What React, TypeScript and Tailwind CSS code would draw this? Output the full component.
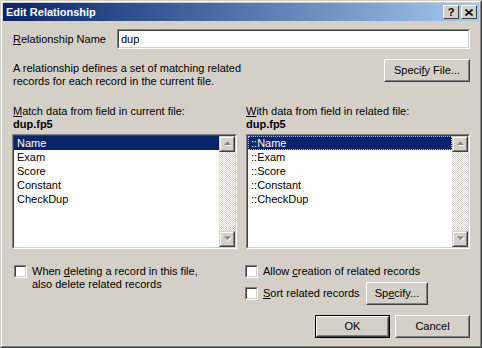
import React from "react";

const FIELDS = ["Name", "Exam", "Score", "Constant", "CheckDup"];

// classic raised button, optional default (black) ring
function Btn({ children, w, isDefault }: { children: React.ReactNode; w: string; isDefault?: boolean }) {
  const inner = (
    <div className="h-full border border-t-white border-l-white border-b-[#404040] border-r-[#404040]">
      <div className="h-full flex items-center justify-center border border-t-[#d4d0c8] border-l-[#d4d0c8] border-b-[#808080] border-r-[#808080]">
        {children}
      </div>
    </div>
  );
  return (
    <div className={`${w} h-[23px] shrink-0 ${isDefault ? "border border-black" : ""}`}>{inner}</div>
  );
}

function Sunken({ className, children }: { className?: string; children?: React.ReactNode }) {
  return (
    <div className={`border border-t-[#808080] border-l-[#808080] border-b-white border-r-white ${className ?? ""}`}>
      <div className="h-full border border-t-[#404040] border-l-[#404040] border-b-[#d4d0c8] border-r-[#d4d0c8] bg-white">
        {children}
      </div>
    </div>
  );
}

function Check() {
  return <Sunken className="w-[13px] h-[13px] shrink-0" />;
}

function ScrollArrow({ up }: { up?: boolean }) {
  return (
    <div className="w-[16px] h-[16px] shrink-0 border border-t-[#d4d0c8] border-l-[#d4d0c8] border-b-[#404040] border-r-[#404040]">
      <div className="h-full bg-[#d4d0c8] flex items-center justify-center border border-t-white border-l-white border-b-[#808080] border-r-[#808080]">
        <svg width="9" height="6" viewBox="0 0 9 6">
          {up ? (
            <>
              <path d="M2 5h7L5.5 1.5z" fill="#fff" />
              <path d="M1 4h7L4.5 0.5z" fill="#808080" />
            </>
          ) : (
            <>
              <path d="M2 1.5h7L5.5 5z" fill="#fff" />
              <path d="M1 0.5h7L4.5 4z" fill="#808080" />
            </>
          )}
        </svg>
      </div>
    </div>
  );
}

function ListBox({ prefix, w, focus }: { prefix: string; w: string; focus?: boolean }) {
  return (
    <Sunken className={`${w} h-[115px]`}>
      <div className="flex h-full">
        <div className="flex-1 flex flex-col">
          {FIELDS.map((f, i) => (
            <div
              key={f}
              className={`h-[14px] leading-[14px] pl-[3px] ${
                i === 0 ? "bg-[#0a246a] text-white" : ""
              } ${i === 0 && focus ? "outline outline-1 outline-dotted outline-[#c0c0c0] -outline-offset-1" : ""}`}
            >
              {prefix}
              {f}
            </div>
          ))}
        </div>
        <div className="w-[16px] flex flex-col bg-[repeating-conic-gradient(#ffffff_0_25%,#d4d0c8_0_50%)] bg-[length:2px_2px]">
          <ScrollArrow up />
          <div className="flex-1" />
          <ScrollArrow />
        </div>
      </div>
    </Sunken>
  );
}

export default function App() {
  return (
    <div
      className="w-[482px] h-[348px] bg-[#d4d0c8] text-black text-[11px] leading-[13px] border border-t-[#d4d0c8] border-l-[#d4d0c8] border-b-[#404040] border-r-[#404040]"
      style={{ fontFamily: '"Liberation Sans", Arial, sans-serif' }}
    >
      <div className="h-full border border-t-white border-l-white border-b-[#808080] border-r-[#808080] p-[1px] flex flex-col">
        {/* Title bar */}
        <div className="h-[18px] shrink-0 flex items-center pl-[3px] pr-[2px] bg-gradient-to-r from-[#0a246a] to-[#a6caf0]">
          <span className="flex-1 text-white font-bold text-[11px]">Edit Relationship</span>
          <div className="flex gap-[2px]">
            <div className="w-[16px] h-[14px] border border-t-white border-l-white border-b-[#404040] border-r-[#404040] bg-[#d4d0c8] flex items-center justify-center">
              <span className="font-bold text-[11px] leading-none">?</span>
            </div>
            <div className="w-[16px] h-[14px] border border-t-white border-l-white border-b-[#404040] border-r-[#404040] bg-[#d4d0c8] flex items-center justify-center">
              <svg width="8" height="7" viewBox="0 0 8 7">
                <path d="M0.5 0.5l7 6M7.5 0.5l-7 6" stroke="#000" strokeWidth="1.6" />
              </svg>
            </div>
          </div>
        </div>

        {/* Body */}
        <div className="flex-1 flex flex-col pl-[9px] pr-[9px] pt-[8px]">
          <div className="flex items-center h-[20px]">
            <span className="w-[105px] pl-[1px]">
              <u>R</u>elationship Name
            </span>
            <Sunken className="flex-1 h-[20px]">
              <div className="pl-[2px] leading-[16px]">dup</div>
            </Sunken>
          </div>

          <div className="flex items-start mt-[10px]">
            <div className="flex-1 pl-[1px] mt-[3px]">
              A relationship defines a set of matching related
              <br />
              records for each record in the current file.
            </div>
            <Btn w="w-[86px]">
              Speci<u>f</u>y File...
            </Btn>
          </div>

          <div className="flex mt-[17px]">
            <div className="w-[234px] pl-[1px]">
              <div>
                <u>M</u>atch data from field in current file:
              </div>
              <div className="font-bold">dup.fp5</div>
            </div>
            <div className="flex-1">
              <div>
                <u>W</u>ith data from field in related file:
              </div>
              <div className="font-bold">dup.fp5</div>
            </div>
          </div>

          <div className="flex gap-[9px] mt-[3px]">
            <ListBox prefix="" w="w-[225px]" />
            <ListBox prefix="::" w="flex-1" focus />
          </div>

          <div className="flex mt-[16px]">
            <div className="w-[233px] flex items-start pl-[2px]">
              <Check />
              <div className="ml-[5px]">
                When <u>d</u>eleting a record in this file,
                <br />
                also delete related records
              </div>
            </div>
            <div className="flex-1 flex flex-col">
              <div className="flex items-center h-[13px]">
                <Check />
                <span className="ml-[5px]">
                  Allow <u>c</u>reation of related records
                </span>
              </div>
              <div className="flex items-center mt-[4px] h-[23px]">
                <Check />
                <span className="ml-[5px] w-[103px]">
                  <u>S</u>ort related records
                </span>
                <Btn w="w-[62px]">
                  Sp<u>e</u>cify...
                </Btn>
              </div>
            </div>
          </div>

          <div className="flex justify-end gap-[5px] mt-[10px]">
            <Btn w="w-[75px]" isDefault>
              OK
            </Btn>
            <Btn w="w-[75px]">Cancel</Btn>
          </div>
        </div>
      </div>
    </div>
  );
}
